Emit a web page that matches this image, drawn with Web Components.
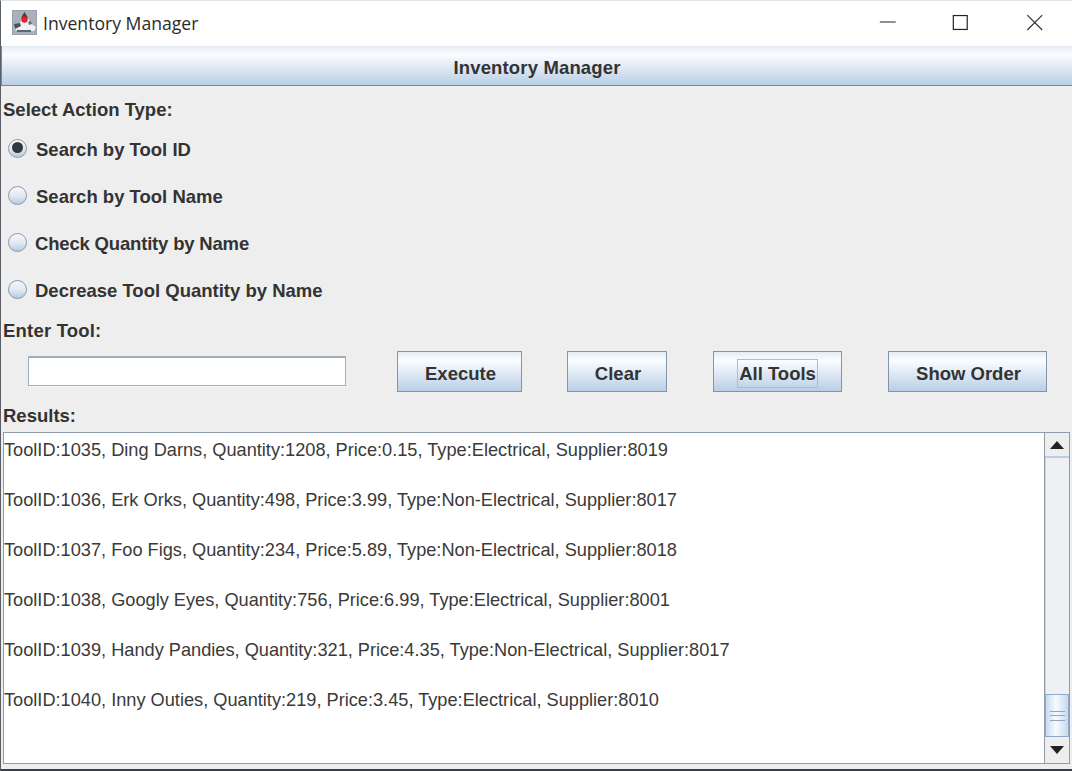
<!DOCTYPE html>
<html>
<head>
<meta charset="utf-8">
<title>Inventory Manager</title>
<style>
    html, body { margin: 0; padding: 0; background: #eeeeee; }
    body { font-family: "Liberation Sans", Arial, sans-serif; overflow: hidden; }
</style>
</head>
<body>
<app-window>
    <title-bar slot="title">Inventory Manager</title-bar>
    <panel-header>Inventory Manager</panel-header>
    <field-label style="--h:41px;--top:14px">Select Action Type:</field-label>
    <radio-option checked style="--gap:9px">Search by Tool ID</radio-option>
    <radio-option style="--gap:9px">Search by Tool Name</radio-option>
    <radio-option style="letter-spacing:-0.18px">Check Quantity by Name</radio-option>
    <radio-option>Decrease Tool Quantity by Name</radio-option>
    <field-label style="--h:36px;--top:6px;letter-spacing:0.2px">Enter Tool:</field-label>
    <action-row>
        <text-field></text-field>
        <swing-button style="--w:125px;--nudge:2px">Execute</swing-button>
        <swing-button style="--w:100px;--nudge:2px;margin-left:-1px">Clear</swing-button>
        <swing-button style="--w:129px" focused>All Tools</swing-button>
        <swing-button style="--w:159px;--nudge:2px">Show Order</swing-button>
    </action-row>
    <field-label style="--h:40px;--top:14px">Results:</field-label>
    <result-pane>
        <div>ToolID:1035, Ding Darns, Quantity:1208, Price:0.15, Type:Electrical, Supplier:8019</div>
        <div>ToolID:1036, Erk Orks, Quantity:498, Price:3.99, Type:Non-Electrical, Supplier:8017</div>
        <div>ToolID:1037, Foo Figs, Quantity:234, Price:5.89, Type:Non-Electrical, Supplier:8018</div>
        <div>ToolID:1038, Googly Eyes, Quantity:756, Price:6.99, Type:Electrical, Supplier:8001</div>
        <div>ToolID:1039, Handy Pandies, Quantity:321, Price:4.35, Type:Non-Electrical, Supplier:8017</div>
        <div>ToolID:1040, Inny Outies, Quantity:219, Price:3.45, Type:Electrical, Supplier:8010</div>
    </result-pane>
</app-window>

<script>
const BLUE_GRADIENT = 'linear-gradient(#e3ecf5 0, #fbfcfe 22%, #dfe9f4 55%, #b9cfe5 100%)';

class AppWindow extends HTMLElement {
    connectedCallback() {
        this.attachShadow({ mode: 'open' });
        this.shadowRoot.innerHTML = `
            <style>
                :host {
                    display: flex;
                    flex-direction: column;
                    box-sizing: border-box;
                    width: 1072px;
                    height: 771px;
                    background: #eeeeee;
                    color: #333333;
                    border-left: 1px solid #5a5f66;
                    border-bottom: 2px solid #3c3f44;
                    border-top: 1px solid #e2e2e2;
                    overflow: hidden;
                }
            </style>
            <slot name="title"></slot>
            <slot></slot>
        `;
    }
}

class TitleBar extends HTMLElement {
    connectedCallback() {
        this.attachShadow({ mode: 'open' });
        this.shadowRoot.innerHTML = `
            <style>
                :host {
                    display: flex;
                    align-items: center;
                    box-sizing: border-box;
                    height: 45px;
                    flex: none;
                    margin-left: -1px;
                    padding: 0 0 2px 12px;
                    background: #ffffff;
                    color: #2b2b2b;
                    font: 17.6px "Open Sans", "Noto Sans", sans-serif;
                }
                .icon { width: 25px; height: 25px; margin-right: 6px; flex: none; }
                .title { flex: 1; }
                .controls { display: flex; margin-bottom: -2px; }
                .controls svg { width: 73.5px; height: 45px; display: block; }
            </style>
            <svg class="icon" viewBox="0 0 25 25">
                <defs><filter id="soft"><feGaussianBlur stdDeviation="0.45"/></filter></defs>
                <rect x="0.5" y="0.5" width="24" height="24" fill="#a9b2bb" stroke="#98a3ae"/>
                <g filter="url(#soft)">
                    <path d="M2 18 L8 13 L10 8 L16 8 L18 13 L24 17 L22 21 L5 21 Z" fill="#f0f1f3"/>
                    <path d="M2 14 L8 13 L9 16 L3 19 Z" fill="#4c5259"/>
                    <path d="M16 12 L19 11 L20 14 L17 15 Z" fill="#6b7178"/>
                    <path d="M5 20 H19 V22 H5 Z" fill="#5f666d"/>
                    <path d="M12.5 2 L16 8 L9 8 Z" fill="#5f3238"/>
                    <circle cx="12.5" cy="9.5" r="3.2" fill="#e3202a"/>
                </g>
            </svg>
            <span class="title"><slot></slot></span>
            <div class="controls">
                <svg viewBox="0 0 74 45"><path d="M28 21 H44" stroke="#444" stroke-width="1.2" fill="none"/></svg>
                <svg viewBox="0 0 74 45"><rect x="28.5" y="14.5" width="14" height="14" stroke="#222" stroke-width="1.2" fill="none"/></svg>
                <svg viewBox="0 0 74 45"><path d="M28.5 14 L43.5 29 M43.5 14 L28.5 29" stroke="#333" stroke-width="1.2" fill="none"/></svg>
            </div>
        `;
    }
}

class PanelHeader extends HTMLElement {
    connectedCallback() {
        this.attachShadow({ mode: 'open' });
        this.shadowRoot.innerHTML = `
            <style>
                :host {
                    display: flex;
                    align-items: center;
                    justify-content: center;
                    box-sizing: border-box;
                    height: 40px;
                    flex: none;
                    padding-top: 4px;
                    border-left: 1px solid #7d8c9c;
                    border-bottom: 1px solid #7b8796;
                    background: ${BLUE_GRADIENT};
                    font-weight: bold;
                    font-size: 18.5px;
                    letter-spacing: 0.15px;
                }
            </style>
            <slot></slot>
        `;
    }
}

class FieldLabel extends HTMLElement {
    connectedCallback() {
        this.attachShadow({ mode: 'open' });
        this.shadowRoot.innerHTML = `
            <style>
                :host {
                    display: block;
                    flex: none;
                    box-sizing: border-box;
                    height: var(--h, 22px);
                    padding: var(--top, 0) 0 0 2px;
                    font-weight: bold;
                    font-size: 18.5px;
                    line-height: 20px;
                }
            </style>
            <slot></slot>
        `;
    }
}

class RadioOption extends HTMLElement {
    connectedCallback() {
        const checked = this.hasAttribute('checked');
        this.attachShadow({ mode: 'open' });
        this.shadowRoot.innerHTML = `
            <style>
                :host {
                    display: flex;
                    align-items: center;
                    gap: var(--gap, 8px);
                    height: 47px;
                    flex: none;
                    padding-left: 7px;
                    font-weight: bold;
                    font-size: 18.5px;
                }
                .dot {
                    position: relative;
                    box-sizing: border-box;
                    width: 19px;
                    height: 19px;
                    margin-top: -5px;
                    flex: none;
                    border-radius: 50%;
                    border: 1.5px solid #8b99a8;
                    background: linear-gradient(#f6f9fc, #dfe8f2 55%, #b4cae0);
                }
                .dot.on::after {
                    content: '';
                    position: absolute;
                    left: 2.5px;
                    top: 2.5px;
                    width: 11px;
                    height: 11px;
                    border-radius: 50%;
                    background: #33363a;
                }
                .label { margin-top: -2px; }
            </style>
            <span class="dot ${checked ? 'on' : ''}"></span>
            <span class="label"><slot></slot></span>
        `;
    }
}

class ActionRow extends HTMLElement {
    connectedCallback() {
        this.attachShadow({ mode: 'open' });
        this.shadowRoot.innerHTML = `
            <style>
                :host {
                    display: flex;
                    align-items: flex-start;
                    gap: 46px;
                    flex: none;
                    height: 41px;
                    padding-left: 27px;
                }
            </style>
            <slot></slot>
        `;
    }
}

class TextField extends HTMLElement {
    connectedCallback() {
        this.attachShadow({ mode: 'open' });
        this.shadowRoot.innerHTML = `
            <style>
                :host {
                    display: block;
                    flex: none;
                    box-sizing: border-box;
                    width: 318px;
                    height: 30px;
                    margin: 5px 5px 0 0;
                    background: #ffffff;
                    border: 1px solid #a0adba;
                    border-top-width: 2px;
                    box-shadow: 0 1px 0 #f8f8f8;
                }
            </style>
        `;
    }
}

class SwingButton extends HTMLElement {
    connectedCallback() {
        const focused = this.hasAttribute('focused');
        this.attachShadow({ mode: 'open' });
        this.shadowRoot.innerHTML = `
            <style>
                :host {
                    display: flex;
                    align-items: center;
                    justify-content: center;
                    box-sizing: border-box;
                    flex: none;
                    width: var(--w);
                    height: 41px;
                    padding: 4px 0 0 var(--nudge, 0);
                    border: 1px solid #8296aa;
                    background: ${BLUE_GRADIENT};
                    font-weight: bold;
                    font-size: 18.5px;
                }
                .focus { padding: 0 1px; line-height: 27px; }
                .focus.on { outline: 1px solid #a9bed4; }
            </style>
            <span class="focus ${focused ? 'on' : ''}"><slot></slot></span>
        `;
    }
}

class ResultPane extends HTMLElement {
    connectedCallback() {
        this.attachShadow({ mode: 'open' });
        this.shadowRoot.innerHTML = `
            <style>
                :host {
                    display: flex;
                    box-sizing: border-box;
                    flex: none;
                    height: 332px;
                    margin: 0 2px 0 2px;
                    border: 1px solid #8f9dab;
                    background: #ffffff;
                }
                .text {
                    flex: 1;
                    padding: 7px 0 0 0;
                    font-size: 18.2px;
                    line-height: 20px;
                    color: #3a3a3a;
                }
                ::slotted(div) { height: 50px; white-space: nowrap; }
                .bar {
                    display: flex;
                    flex-direction: column;
                    width: 24px;
                    flex: none;
                    border-left: 1px solid #8f9dab;
                    background: #eeeeee;
                }
                .arrow {
                    display: flex;
                    align-items: center;
                    justify-content: center;
                    height: 26px;
                    flex: none;
                    padding-bottom: 1px;
                    box-sizing: border-box;
                    background: #eeeeee;
                }
                .track { flex: 1; background: #eef0f3; border-left: 1px solid #c7d3df; }
                .thumb {
                    display: flex;
                    align-items: center;
                    justify-content: center;
                    height: 43px;
                    flex: none;
                    box-sizing: border-box;
                    border: 1px solid #8fa8cc;
                    background: linear-gradient(90deg, #c8daf0, #f8fafe 45%, #c6d9ef);
                }
                .arrow.top { height: 25px; padding-bottom: 0; border-bottom: 2px solid #b9cee4; }
                .grip { width: 15px; height: 8px; border-top: 1px solid #8ea4bf; border-bottom: 1px solid #8ea4bf; position: relative; }
                .grip::after { content: ''; position: absolute; left: 0; right: 0; top: 3px; height: 1px; background: #8ea4bf; }
            </style>
            <div class="text"><slot></slot></div>
            <div class="bar">
                <div class="arrow top"><svg width="14" height="8" viewBox="0 0 14 8"><path d="M7 0 L14 8 H0 Z" fill="#222"/></svg></div>
                <div class="track"></div>
                <div class="thumb"><div class="grip"></div></div>
                <div class="arrow"><svg width="14" height="8" viewBox="0 0 14 8"><path d="M0 0 H14 L7 8 Z" fill="#222"/></svg></div>
            </div>
        `;
    }
}

customElements.define('app-window', AppWindow);
customElements.define('title-bar', TitleBar);
customElements.define('panel-header', PanelHeader);
customElements.define('field-label', FieldLabel);
customElements.define('radio-option', RadioOption);
customElements.define('action-row', ActionRow);
customElements.define('text-field', TextField);
customElements.define('swing-button', SwingButton);
customElements.define('result-pane', ResultPane);
</script>
</body>
</html>
